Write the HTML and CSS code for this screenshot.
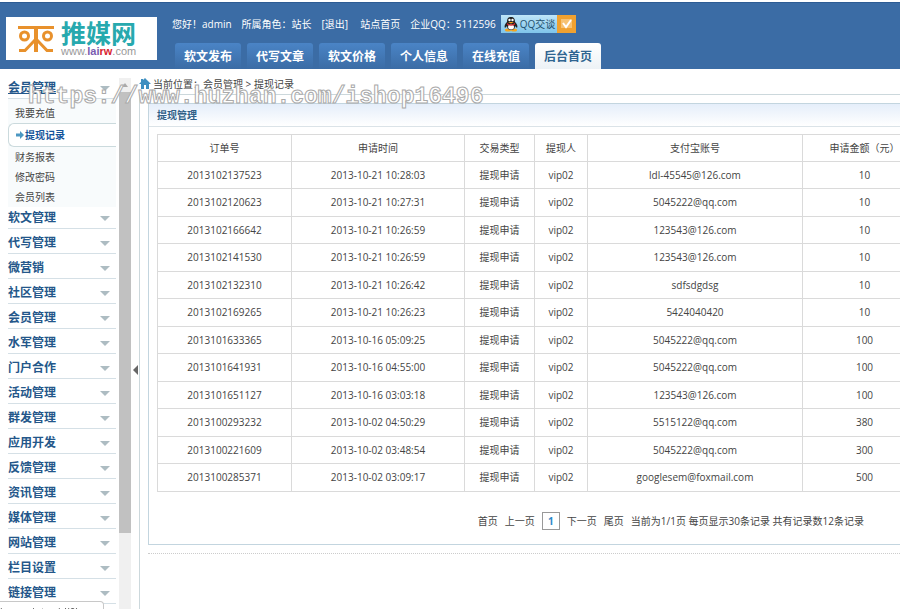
FILE: index.html
```html
<!DOCTYPE html>
<html lang="zh-CN">
<head>
  <meta charset="UTF-8">
  <meta name="viewport" content="width=device-width, initial-scale=1.0">
  <title>提现记录</title>
  <link rel="stylesheet" href="styles.css">
</head>
<body>

  <header class="header">
    <a class="logo" href="#">
      <svg class="logo-mark" viewBox="0 0 38 28" width="38" height="28" fill="none" stroke="#e8912c" stroke-width="3">
        <path d="M1 2.500H37M2 25.500H8L18 15M20 15L30 25.500H36"/>
        <path d="M19 1V27" stroke-width="4"/>
        <circle cx="7.500" cy="11" r="4"/>
        <circle cx="30.500" cy="11" r="4"/>
      </svg>
      <span class="logo-text">
        <span class="logo-name">推媒网</span>
        <span class="logo-url">www.<b class="lai">lai</b><b class="rw">rw</b>.com</span>
      </span>
    </a>
    <div class="header-main">
      <div class="userbar">
        <span class="user">您好！admin</span>
        <span class="role">所属角色：站长</span>
        <a class="logout" href="#">[退出]</a>
        <a class="site" href="#">站点首页</a>
        <span>企业QQ：5112596</span>
        <a class="qq" href="#">
          <svg width="14" height="16" viewBox="0 0 14 16">
            <ellipse cx="4" cy="14" rx="3" ry="1.5" fill="#f6a51c"/>
            <ellipse cx="10" cy="14" rx="3" ry="1.5" fill="#f6a51c"/>
            <path d="M7 1C4 1 3 3 3 6C1 8 0 10 1 12L3 10C3 13 5 14 7 14S11 13 11 10L13 12C14 10 13 8 11 6C11 3 10 1 7 1Z" fill="#222"/>
            <ellipse cx="7" cy="11" rx="3" ry="2.5" fill="#fff"/>
            <circle cx="5.5" cy="4" r="1.2" fill="#fff"/>
            <circle cx="8.5" cy="4" r="1.2" fill="#fff"/>
            <path d="M4 6H10L7 7.5Z" fill="#f6a51c"/>
            <path d="M3 7Q7 10 11 7V8.5Q7 11 3 8.5Z" fill="#e0282b"/>
          </svg>
          <span>QQ交谈</span>
          <svg class="qq-check" width="19" height="18" viewBox="0 0 19 18">
            <path d="M4 4H15V13H4Z" fill="#f7c273"/>
            <path d="M6 8L9 12L14 5" fill="none" stroke="#fff" stroke-width="2"/>
          </svg>
        </a>
      </div>
      <nav class="tabs">
        <a href="#">软文发布</a>
        <a href="#">代写文章</a>
        <a href="#">软文价格</a>
        <a href="#">个人信息</a>
        <a href="#">在线充值</a>
        <a class="active" href="#">后台首页</a>
      </nav>
    </div>
  </header>

  <div class="wrap">
    <aside class="sidebar">
      <nav class="menu">
        <a class="menu-title open" href="#">会员管理</a>
        <ul class="submenu">
          <li><a href="#">我要充值</a></li>
          <li class="current"><a href="#">
            <svg width="8" height="8" viewBox="0 0 8 8"><path d="M0 2.5H4V0L8 4L4 8V5.5H0Z" fill="#4c97c2"/></svg>提现记录</a></li>
          <li><a href="#">财务报表</a></li>
          <li><a href="#">修改密码</a></li>
          <li><a href="#">会员列表</a></li>
        </ul>
        <a class="menu-title" href="#">软文管理</a>
        <a class="menu-title" href="#">代写管理</a>
        <a class="menu-title" href="#">微营销</a>
        <a class="menu-title" href="#">社区管理</a>
        <a class="menu-title" href="#">会员管理</a>
        <a class="menu-title" href="#">水军管理</a>
        <a class="menu-title" href="#">门户合作</a>
        <a class="menu-title" href="#">活动管理</a>
        <a class="menu-title" href="#">群发管理</a>
        <a class="menu-title" href="#">应用开发</a>
        <a class="menu-title" href="#">反馈管理</a>
        <a class="menu-title" href="#">资讯管理</a>
        <a class="menu-title" href="#">媒体管理</a>
        <a class="menu-title" href="#">网站管理</a>
        <a class="menu-title" href="#">栏目设置</a>
        <a class="menu-title" href="#">链接管理</a>
      </nav>
      <div class="scrollbar">
        <svg width="12" height="14" viewBox="0 0 12 14"><path d="M3 9L6 5L9 9Z" fill="#aaa"/></svg>
        <div class="thumb"></div>
      </div>
      <button class="toggle" aria-label="收起菜单"></button>
    </aside>

    <main class="main">
      <div class="crumbs">
        <svg width="12" height="11" viewBox="0 0 12 11"><path d="M6 0L12 6H10V11H7V7H5V11H2V6H0L2 4V1H4V2Z" fill="#3f8fc0"/></svg>
        <span>当前位置：会员管理 &gt; 提现记录</span>
      </div>
      <div class="content">
        <section class="panel">
          <h2>提现管理</h2>
          <div class="table-box">
            <table>
              <colgroup>
                <col class="c-order"><col class="c-time"><col class="c-type"><col class="c-user"><col class="c-account"><col class="c-money">
              </colgroup>
              <thead>
                <tr><th>订单号</th><th>申请时间</th><th>交易类型</th><th>提现人</th><th>支付宝账号</th><th>申请金额（元）</th></tr>
              </thead>
              <tbody>
                <tr><td>2013102137523</td><td>2013-10-21 10:28:03</td><td>提现申请</td><td>vip02</td><td>ldl-45545@126.com</td><td>10</td></tr>
                <tr><td>2013102120623</td><td>2013-10-21 10:27:31</td><td>提现申请</td><td>vip02</td><td>5045222@qq.com</td><td>10</td></tr>
                <tr><td>2013102166642</td><td>2013-10-21 10:26:59</td><td>提现申请</td><td>vip02</td><td>123543@126.com</td><td>10</td></tr>
                <tr><td>2013102141530</td><td>2013-10-21 10:26:59</td><td>提现申请</td><td>vip02</td><td>123543@126.com</td><td>10</td></tr>
                <tr><td>2013102132310</td><td>2013-10-21 10:26:42</td><td>提现申请</td><td>vip02</td><td>sdfsdgdsg</td><td>10</td></tr>
                <tr><td>2013102169265</td><td>2013-10-21 10:26:23</td><td>提现申请</td><td>vip02</td><td>5424040420</td><td>10</td></tr>
                <tr><td>2013101633365</td><td>2013-10-16 05:09:25</td><td>提现申请</td><td>vip02</td><td>5045222@qq.com</td><td>100</td></tr>
                <tr><td>2013101641931</td><td>2013-10-16 04:55:00</td><td>提现申请</td><td>vip02</td><td>5045222@qq.com</td><td>100</td></tr>
                <tr><td>2013101651127</td><td>2013-10-16 03:03:18</td><td>提现申请</td><td>vip02</td><td>123543@126.com</td><td>100</td></tr>
                <tr><td>2013100293232</td><td>2013-10-02 04:50:29</td><td>提现申请</td><td>vip02</td><td>5515122@qq.com</td><td>380</td></tr>
                <tr><td>2013100221609</td><td>2013-10-02 03:48:54</td><td>提现申请</td><td>vip02</td><td>5045222@qq.com</td><td>300</td></tr>
                <tr><td>2013100285371</td><td>2013-10-02 03:09:17</td><td>提现申请</td><td>vip02</td><td>googlesem@foxmail.com</td><td>500</td></tr>
              </tbody>
            </table>
          </div>
          <div class="pager">
            <a href="#">首页</a>
            <a href="#">上一页</a>
            <a class="page" href="#">1</a>
            <a href="#">下一页</a>
            <a href="#">尾页</a>
            <span>当前为1/1页 每页显示30条记录 共有记录数12条记录</span>
          </div>
        </section>
        <div class="dotted"></div>
      </div>
    </main>
  </div>

  <div class="watermark">https://www.huzhan.com/ishop16496</div>
  <div class="status">javascript:void(0)</div>

</body>
</html>
```
FILE: styles.css
```css
* {
  box-sizing: border-box;
}
body {
  margin: 0;
  height: 100vh;
  display: flex;
  flex-direction: column;
  overflow: hidden;
  background: #fff;
  color: #444;
  font-family: "Open Sans", "Noto Sans CJK SC", sans-serif;
  font-size: 10px;
  line-height: 20px;
}
a {
  color: inherit;
  text-decoration: none;
}

/* header */
.header {
  display: flex;
  flex: none;
  height: 67px;
  margin-top: 2px;
  padding-left: 6px;
  border-top: 1px solid #2d5c94;
  background: #3b6ca5;
}
.logo {
  display: flex;
  align-items: center;
  width: 151px;
  height: 43px;
  margin-top: 14px;
  padding-left: 11px;
  gap: 6px;
  background: #fff;
}
.logo-text {
  display: flex;
  flex-direction: column;
}
.logo-name {
  color: #27a9ae;
  font-size: 25px;
  font-weight: bold;
  line-height: 25px;
}
.logo-url {
  color: #999;
  font-family: "Liberation Sans", sans-serif;
  font-size: 11px;
  line-height: 11px;
}
.lai {
  color: #7a5cb0;
}
.rw {
  color: #d8232f;
}
.header-main {
  display: flex;
  flex-direction: column;
  justify-content: space-between;
  padding: 11px 0 0 15px;
}
.userbar {
  display: flex;
  align-items: center;
  color: #fff;
  white-space: nowrap;
}
.user, .role, .site {
  margin-right: 10px;
}
.logout {
  margin-right: 12px;
}
.qq {
  display: flex;
  align-items: center;
  height: 18px;
  margin-left: 5px;
  padding-left: 3px;
  gap: 2px;
  background: linear-gradient(#bfe5f8, #7fc4ea);
  color: #23506e;
}
.qq-check {
  background: #f0a130;
}
.tabs {
  display: flex;
  gap: 6px;
  padding-left: 3px;
}
.tabs a {
  width: 66px;
  height: 26px;
  border-radius: 3px 3px 0 0;
  background: linear-gradient(#4a84c6, #3b6ca5);
  color: #fff;
  font-size: 12px;
  font-weight: bold;
  line-height: 28px;
  text-align: center;
}
.tabs .active {
  background: linear-gradient(#fff, #edf2f6);
  color: #2f6591;
}

/* sidebar */
.wrap {
  display: flex;
  flex: 1;
  min-height: 0;
}
.sidebar {
  display: flex;
  flex: none;
  width: 139px;
  padding-left: 8px;
}
.menu {
  width: 108px;
  margin-right: 3px;
  padding-top: 5px;
}
.menu-title {
  display: flex;
  align-items: center;
  justify-content: space-between;
  height: 25px;
  padding: 4px 6px 0 0;
  border-bottom: 1px solid #d5e0e6;
  color: #24578a;
  font-size: 12px;
  font-weight: bold;
}
.menu-title::after {
  content: "";
  border: 5px solid transparent;
  border-top-color: #adbcc2;
  border-bottom: 0;
}
.open {
  text-decoration: underline;
}
.submenu {
  margin: 0 0 -3px;
  padding: 4px 0 0;
  list-style: none;
  background: #f8fbfc;
}
.submenu a {
  display: block;
  padding-left: 7px;
}
.submenu .current {
  border: 1px solid #cbdadd;
  border-right: 0;
  border-radius: 6px 0 0 6px;
  background: #fff;
}
.submenu .current a {
  display: flex;
  align-items: center;
  height: 22px;
  gap: 1px;
  color: #14549a;
  font-weight: bold;
}
.scrollbar {
  display: flex;
  flex-direction: column;
  width: 12px;
  margin-top: 9px;
  background: #f0f0f0;
}
.thumb {
  height: 83%;
  background: #c1c1c1;
}
.toggle {
  align-self: center;
  width: 5px;
  margin: 61px 0 0 2px;
  padding: 0;
  border: 5px solid transparent;
  border-right-color: #666;
  border-left: 0;
  background: none;
}

/* content */
.main {
  display: flex;
  flex: 1;
  flex-direction: column;
  min-width: 0;
}
.crumbs {
  display: flex;
  align-items: center;
  height: 25px;
  gap: 2px;
  padding-top: 4px;
}
.content {
  flex: 1;
  padding: 8px 0 0 8px;
  border-top: 1px solid #ccd8dc;
  border-left: 1px solid #ccd8dc;
}
.panel {
  border: 1px solid #c3d5df;
  border-right: 0;
}
.panel h2 {
  height: 23px;
  margin: 0;
  padding-left: 8px;
  border-bottom: 1px solid #dbe3e8;
  background: linear-gradient(#e5eefa, #fff);
  color: #2f5f87;
  font-size: 10px;
  line-height: 23px;
}
.table-box {
  margin: 7px 0 0 8px;
  overflow: hidden;
}
table {
  width: 770px;
  border-collapse: collapse;
  table-layout: fixed;
}
.c-order { width: 134px; }
.c-time { width: 173px; }
.c-type { width: 70px; }
.c-user { width: 53px; }
.c-account { width: 215px; }
.c-money { width: 124px; }
th, td {
  height: 27px;
  padding: 0 0 1px;
  border: 1px solid #dadada;
  font-weight: normal;
  text-align: center;
  white-space: nowrap;
}
tbody tr:nth-child(even) td {
  height: 28px;
}
.pager {
  display: flex;
  align-items: center;
  justify-content: flex-end;
  gap: 7px;
  padding: 19px 36px 13px 0;
  white-space: nowrap;
}
.page {
  width: 18px;
  height: 18px;
  border: 1px solid #999;
  color: #2b88c9;
  font-weight: bold;
  line-height: 16px;
  text-align: center;
}
.dotted {
  margin-top: 8px;
  border-top: 1px dotted #ccc;
}

/* overlays */
.watermark {
  position: absolute;
  top: 82px;
  left: 28px;
  color: #fff;
  font-family: "Liberation Mono", monospace;
  font-size: 23px;
  font-weight: bold;
  line-height: 30px;
  -webkit-text-stroke: 1px #aaa;
  pointer-events: none;
}
.status {
  position: fixed;
  bottom: -14px;
  left: 0;
  width: 104px;
  border: 1px solid #c8c8c8;
  border-left: 0;
  border-radius: 0 4px 0 0;
  background: #fff;
}
```
